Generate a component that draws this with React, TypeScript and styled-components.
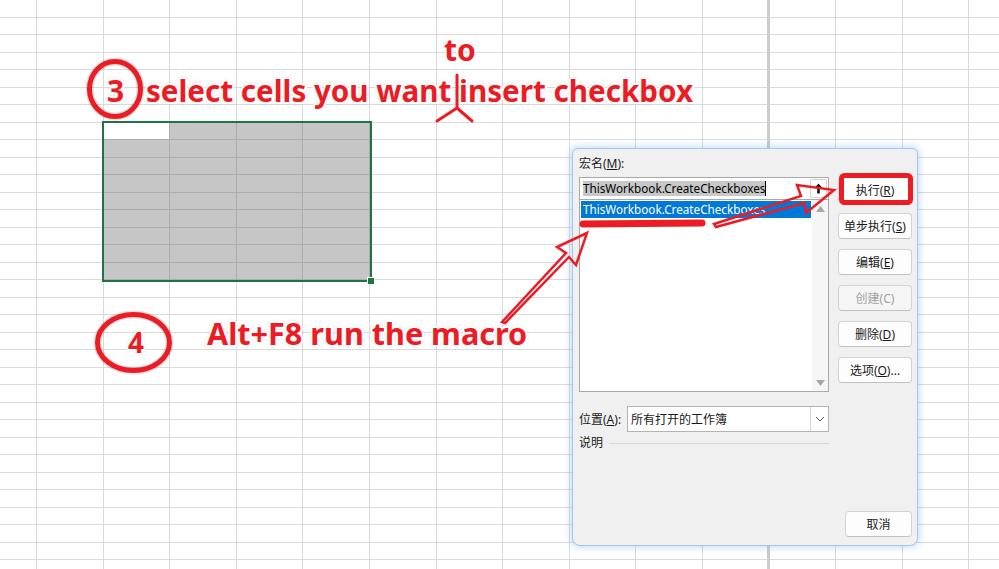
import React from 'react';
import styled, { createGlobalStyle } from 'styled-components';

const GlobalStyle = createGlobalStyle`
  html, body { margin: 0; padding: 0; background: #ffffff; }
  body { width: 999px; height: 569px; overflow: hidden; font-family: "Noto Sans", "Noto Sans CJK SC", sans-serif; }
`;

const RED = '#ec1c24';

const Page = styled.div`
  position: relative;
  width: 999px;
  height: 569px;
  overflow: hidden;
  background: #ffffff;
`;

const Sheet = styled.div`
  display: grid;
  grid-template-columns: 37px repeat(15, 66.6px);
  grid-auto-rows: 17.5px;
`;

const Cell = styled.div<{ $sel?: boolean; $active?: boolean; $break?: boolean }>`
  box-sizing: border-box;
  border-right: ${(p) => (p.$break ? '3px solid #cbcbcb' : `1px solid ${p.$sel ? '#adadad' : '#dadada'}`)};
  border-bottom: 1px solid ${(p) => (p.$sel ? '#adadad' : '#dadada')};
  background: ${(p) => (p.$sel && !p.$active ? '#c6c6c6' : '#ffffff')};
`;

const Selection = styled.div`
  position: absolute;
  left: 102px;
  top: 121px;
  width: 270px;
  height: 161px;
  box-sizing: border-box;
  border: 2px solid #217346;
`;

const FillHandle = styled.div`
  position: absolute;
  right: -5px;
  bottom: -5px;
  width: 6px;
  height: 6px;
  background: #217346;
  border: 1px solid #ffffff;
`;

const Note = styled.div<{ $x: number; $y: number; $size?: number }>`
  position: absolute;
  left: ${(p) => p.$x}px;
  top: ${(p) => p.$y}px;
  font-family: "Noto Sans", sans-serif;
  font-weight: 700;
  font-size: ${(p) => p.$size ?? 30}px;
  line-height: 30px;
  white-space: nowrap;
  color: ${RED};
  text-shadow: 2px 0 0 #fff, -2px 0 0 #fff, 0 2px 0 #fff, 0 -2px 0 #fff,
    1.5px 1.5px 0 #fff, -1.5px -1.5px 0 #fff, 1.5px -1.5px 0 #fff, -1.5px 1.5px 0 #fff,
    0 0 4px rgba(0, 0, 0, 0.3);
`;

const Overlay = styled.svg`
  position: absolute;
  left: 0;
  top: 0;
  width: 999px;
  height: 569px;
  pointer-events: none;
`;

const Dialog = styled.div`
  position: absolute;
  left: 572px;
  top: 148px;
  width: 346px;
  height: 398px;
  box-sizing: border-box;
  background: #f0f0f0;
  border: 1px solid #a3c6ee;
  border-radius: 6px 6px 8px 8px;
  box-shadow: 0 0 6px 2px rgba(110, 165, 235, 0.35);
  padding: 8px 5px 8px 6px;
  display: flex;
  flex-direction: column;
  font-family: "Noto Sans", "Noto Sans CJK SC", sans-serif;
  font-size: 12px;
  color: #1a1a1a;
`;

const Main = styled.div`
  display: flex;
  gap: 9px;
`;

const LeftCol = styled.div`
  width: 250px;
  display: flex;
  flex-direction: column;
`;

const RightCol = styled.div`
  width: 74px;
  padding-top: 20px;
  display: flex;
  flex-direction: column;
  gap: 10px;
`;

const Label = styled.div`
  height: 14px;
  line-height: 14px;
  white-space: nowrap;
`;

const InputRow = styled.div`
  margin-top: 6px;
  height: 22px;
  box-sizing: border-box;
  border: 1px solid #a9a9a9;
  border-bottom: none;
  background: #ffffff;
  display: flex;
  align-items: center;
`;

const InputField = styled.div`
  flex: 1;
  padding-left: 3px;
  display: flex;
  align-items: center;
  overflow: hidden;
`;

const SelText = styled.span`
  background: #c8c8c8;
  color: #000;
  font-size: 11.7px;
  line-height: 15px;
  white-space: nowrap;
`;

const Caret = styled.span`
  width: 1px;
  height: 15px;
  background: #000;
`;

const UpButton = styled.div`
  width: 17px;
  height: 19px;
  margin-right: 1px;
  box-sizing: border-box;
  border: 1px solid #d2d2d2;
  border-radius: 2px;
  background: #fff;
  display: flex;
  align-items: center;
  justify-content: center;
`;

const ListBox = styled.div`
  height: 193px;
  box-sizing: border-box;
  border: 1px solid #a9a9a9;
  background: #ffffff;
  display: flex;
`;

const Items = styled.div`
  flex: 1;
  padding: 1px;
`;

const Item = styled.div<{ $selected?: boolean }>`
  height: 17px;
  line-height: 17px;
  padding-left: 2px;
  font-size: 11.7px;
  white-space: nowrap;
  overflow: hidden;
  background: ${(p) => (p.$selected ? '#0078d7' : 'transparent')};
  color: ${(p) => (p.$selected ? '#ffffff' : '#000')};
`;

const ScrollBar = styled.div`
  width: 16px;
  background: #f6f6f6;
  display: flex;
  flex-direction: column;
  justify-content: space-between;
  align-items: center;
  padding: 6px 0 5px;
`;

const LocationRow = styled.div`
  margin-top: 14px;
  height: 26px;
  display: flex;
  align-items: center;
`;

const LocLabel = styled.div`
  width: 48px;
  white-space: nowrap;
`;

const Combo = styled.div`
  flex: 1;
  height: 26px;
  box-sizing: border-box;
  border: 1px solid #b3b3b3;
  background: #fff;
  display: flex;
  align-items: center;
  padding-left: 3px;
`;

const ComboText = styled.div`
  flex: 1;
  white-space: nowrap;
`;

const ComboButton = styled.div`
  width: 18px;
  height: 24px;
  box-sizing: border-box;
  border-left: 1px solid #d6d6d6;
  display: flex;
  align-items: center;
  justify-content: center;
`;

const DescRow = styled.div`
  margin-top: 4px;
  height: 14px;
  line-height: 14px;
  display: flex;
  align-items: center;
  gap: 6px;
`;

const Rule = styled.div`
  flex: 1;
  height: 1px;
  background: #d8d8d8;
`;

const Button = styled.div<{ $disabled?: boolean; $width?: number }>`
  width: ${(p) => p.$width ?? 74}px;
  height: 26px;
  box-sizing: border-box;
  border: 1px solid #d3d3d3;
  border-bottom-color: #c2c2c2;
  border-radius: 4px;
  background: ${(p) => (p.$disabled ? '#f5f5f5' : '#fdfdfd')};
  color: ${(p) => (p.$disabled ? '#a2a2a2' : '#1a1a1a')};
  display: flex;
  align-items: center;
  justify-content: center;
  white-space: nowrap;
`;

const Footer = styled.div`
  margin-top: auto;
  display: flex;
  justify-content: flex-end;
`;

const ROWS = 33;
const COLS = 16;

export default function App() {
  const cells: React.ReactNode[] = [];
  for (let r = 0; r < ROWS; r++) {
    for (let c = 0; c < COLS; c++) {
      const sel = r >= 7 && r <= 15 && c >= 2 && c <= 5;
      const active = r === 7 && c === 2;
      cells.push(<Cell key={`${r}-${c}`} $sel={sel} $active={active} $break={c === 11} />);
    }
  }

  return (
    <Page>
      <GlobalStyle />
      <Sheet>{cells}</Sheet>
      <Selection>
        <FillHandle />
      </Selection>

      <Dialog>
        <Main>
          <LeftCol>
            <Label>
              宏名(<u>M</u>):
            </Label>
            <InputRow>
              <InputField>
                <SelText>ThisWorkbook.CreateCheckboxes</SelText>
                <Caret />
              </InputField>
              <UpButton>
                <svg width="9" height="11" viewBox="0 0 9 11">
                  <path d="M4.5 0.5 L0.5 5 H3.2 V10.5 H5.8 V5 H8.5 Z" fill="#111" />
                </svg>
              </UpButton>
            </InputRow>
            <ListBox>
              <Items>
                <Item $selected>ThisWorkbook.CreateCheckboxes</Item>
              </Items>
              <ScrollBar>
                <svg width="9" height="6" viewBox="0 0 9 6">
                  <path d="M0 6 L4.5 0 L9 6 Z" fill="#a6a6a6" />
                </svg>
                <svg width="9" height="6" viewBox="0 0 9 6">
                  <path d="M0 0 L4.5 6 L9 0 Z" fill="#a6a6a6" />
                </svg>
              </ScrollBar>
            </ListBox>
            <LocationRow>
              <LocLabel>
                位置(<u>A</u>):
              </LocLabel>
              <Combo>
                <ComboText>所有打开的工作簿</ComboText>
                <ComboButton>
                  <svg width="10" height="6" viewBox="0 0 10 6">
                    <path d="M1 1 L5 5 L9 1" fill="none" stroke="#5a5a5a" strokeWidth="1" />
                  </svg>
                </ComboButton>
              </Combo>
            </LocationRow>
            <DescRow>
              <span>说明</span>
              <Rule />
            </DescRow>
          </LeftCol>
          <RightCol>
            <Button>
              执行(<u>R</u>)
            </Button>
            <Button>
              单步执行(<u>S</u>)
            </Button>
            <Button>
              编辑(<u>E</u>)
            </Button>
            <Button $disabled>创建(C)</Button>
            <Button>
              删除(<u>D</u>)
            </Button>
            <Button>
              选项(<u>O</u>)...
            </Button>
          </RightCol>
        </Main>
        <Footer>
          <Button $width={67}>取消</Button>
        </Footer>
      </Dialog>

      <Note $x={444} $y={35}>to</Note>
      <Note $x={107} $y={76}>3</Note>
      <Note $x={146} $y={76} $size={29.6}>select cells you want insert checkbox</Note>
      <Note $x={128} $y={327} $size={28}>4</Note>
      <Note $x={207} $y={318} $size={30.6}>Alt+F8 run the macro</Note>

      <Overlay viewBox="0 0 999 569">
        <g fill="none" strokeLinejoin="round" strokeLinecap="round">
          <ellipse cx="115" cy="89" rx="25.5" ry="27.5" stroke="rgba(0,0,0,0.12)" strokeWidth="8" />
          <ellipse cx="115" cy="89" rx="25.5" ry="27.5" stroke={RED} strokeWidth="5" />
          <ellipse cx="133.5" cy="342.5" rx="36" ry="28" stroke="rgba(0,0,0,0.12)" strokeWidth="8" />
          <ellipse cx="133.5" cy="342.5" rx="36" ry="28" stroke={RED} strokeWidth="5" />
          <path d="M457 75 L457 108 M437 121 L457 108 L472 121" stroke={RED} strokeWidth="3" />
          <path d="M583 224 L702 223" stroke={RED} strokeWidth="7" />
          <path
            d="M502 322 L566 253 L557 247 L587 233 L576 265 L569 257 L505 323 Z"
            stroke={RED}
            strokeWidth="2.5"
            strokeLinejoin="miter"
          />
          <path
            d="M714 224 L801 196 L797 185 L834 190 L806 213 L804 203 L716 227 Z"
            stroke={RED}
            strokeWidth="2.5"
            strokeLinejoin="miter"
          />
          <rect x="841.5" y="175.5" width="69" height="27" rx="3" stroke={RED} strokeWidth="5" />
        </g>
      </Overlay>
    </Page>
  );
}
